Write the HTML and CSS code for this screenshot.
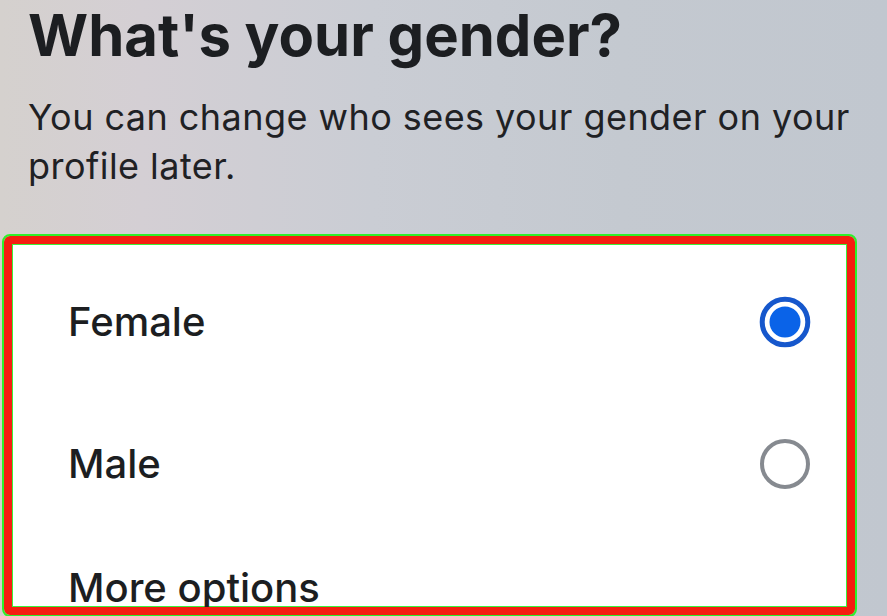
FILE: index.html
```html
<!DOCTYPE html>
<html lang="en">
<head>
<meta charset="utf-8">
<title>What's your gender?</title>
<link rel="stylesheet" href="styles.css">
</head>
<body>
<div class="page">
  <header class="intro">
    <h1 class="title">What's your gender?</h1>
    <p class="subtitle">You can change who sees your gender on your profile later.</p>
  </header>
  <section class="card">
    <div class="option">
      <span class="label">Female</span>
      <svg class="radio" width="52" height="52" viewBox="0 0 52 52">
        <circle cx="26" cy="26" r="22.8" fill="none" stroke="#1657cc" stroke-width="5"/>
        <circle cx="26" cy="26" r="15.5" fill="#0a63e8"/>
      </svg>
    </div>
    <div class="option">
      <span class="label">Male</span>
      <svg class="radio" width="52" height="52" viewBox="0 0 52 52">
        <circle cx="26" cy="26" r="23" fill="none" stroke="#868a90" stroke-width="4"/>
      </svg>
    </div>
    <div class="option option-more">
      <span class="label">More options</span>
    </div>
  </section>
</div>
</body>
</html>
```

FILE: styles.css
```css
html, body {
  margin: 0;
  padding: 0;
}

body {
  width: 887px;
  height: 616px;
  overflow: hidden;
  font-family: Inter, "Noto Sans", "Liberation Sans", sans-serif;
  color: #1c1e21;
  background: linear-gradient(90deg, #d5d1ce 0%, #d4cfd4 16%, #cacdd4 42%, #c4c9d0 70%, #c1c7cf 100%);
}

.page {
  display: flex;
  flex-direction: column;
}

.intro {
  padding: 0 20px 0 28px;
}

.title {
  margin: 0;
  padding-top: 0;
  font-size: 58px;
  line-height: 71px;
  font-weight: 700;
  letter-spacing: 0;
  color: #1c1e21;
}

.subtitle {
  margin: 22px 0 0;
  font-size: 36px;
  line-height: 49px;
  font-weight: 400;
  letter-spacing: 0.45px;
  color: #1f2124;
}

.card {
  margin: 45px 0 0 4px;
  width: 851px;
  height: 379px;
  box-sizing: border-box;
  border: 8px solid #f51d10;
  border-radius: 6px;
  outline: 2px solid #2ef02a;
  box-shadow: inset 0 0 0 1px #3cf03a;
  background: #ffffff;
  overflow: hidden;
  padding-top: 7px;
}

.option {
  height: 142px;
  display: flex;
  align-items: center;
  justify-content: space-between;
  padding: 0 37px 0 56px;
}

.option-more {
  align-items: flex-start;
  padding-top: 29px;
  box-sizing: border-box;
}

.label {
  font-size: 40px;
  line-height: 48px;
  font-weight: 500;
  color: #1c1e21;
}

.radio {
  display: block;
  margin-right: -1px;
}
```
